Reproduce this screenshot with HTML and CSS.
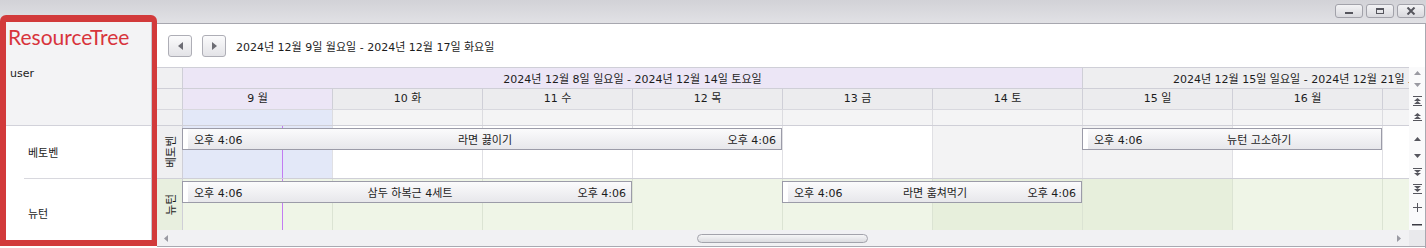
FILE: index.html
```html
<!DOCTYPE html>
<html>
<head>
  <meta charset="utf-8">
  <title>Scheduler</title>
  <link rel="stylesheet" href="styles.css">
</head>
<body>
<div class="window">
  <div class="titlebar">
    <span class="win-btn"><svg width="10" height="8" viewBox="0 0 10 8"><rect x="1" y="5" width="8" height="2" fill="#55555d"/></svg></span>
    <span class="win-btn"><svg width="10" height="8" viewBox="0 0 10 8"><rect x="1.5" y="1.5" width="7" height="5" fill="none" stroke="#55555d"/><rect x="1" y="1" width="8" height="2" fill="#55555d"/></svg></span>
    <span class="win-btn"><svg width="10" height="8" viewBox="0 0 10 8"><path d="M1.5 0.5 L8.5 7.5 M8.5 0.5 L1.5 7.5" stroke="#55555d" stroke-width="2"/></svg></span>
  </div>

  <div class="main">
    <aside class="resource-tree">
      <div class="tree-head">
        <div class="tree-title">ResourceTree</div>
        <div class="tree-user">user</div>
      </div>
      <div class="tree-row">베토벤</div>
      <div class="tree-row last">뉴턴</div>
    </aside>

    <section class="scheduler">
      <div class="toolbar">
        <button class="nav-btn"><svg width="5" height="8" viewBox="0 0 5 8"><path d="M5 0 L0 4 L5 8Z" fill="#6c6c74"/></svg></button>
        <button class="nav-btn"><svg width="5" height="8" viewBox="0 0 5 8"><path d="M0 0 L5 4 L0 8Z" fill="#6c6c74"/></svg></button>
        <span class="range">2024년 12월 9일 월요일 - 2024년 12월 17일 화요일</span>
      </div>

      <div class="view">
        <div class="grid">
          <div class="hrow week-row">
            <div class="corner"></div>
            <div class="week current">2024년 12월 8일 일요일 - 2024년 12월 14일 토요일</div>
            <div class="week next">2024년 12월 15일 일요일 - 2024년 12월 21일 토요일</div>
          </div>
          <div class="hrow day-row">
            <div class="corner"></div>
            <div class="day today">9 월</div>
            <div class="day">10 화</div>
            <div class="day">11 수</div>
            <div class="day">12 목</div>
            <div class="day">13 금</div>
            <div class="day">14 토</div>
            <div class="day">15 일</div>
            <div class="day">16 월</div>
            <div class="day">17 화</div>
          </div>
          <div class="hrow allday-row">
            <div class="corner"></div>
            <div class="slot today"></div>
            <div class="slot"></div>
            <div class="slot"></div>
            <div class="slot"></div>
            <div class="slot"></div>
            <div class="slot"></div>
            <div class="slot"></div>
            <div class="slot"></div>
            <div class="slot"></div>
          </div>

          <div class="res-row">
            <div class="res-label"><span>베토벤</span></div>
            <div class="lane">
              <div class="cells">
                <div class="cell today"></div>
                <div class="cell"></div>
                <div class="cell"></div>
                <div class="cell"></div>
                <div class="cell"></div>
                <div class="cell weekend"></div>
                <div class="cell weekend"></div>
                <div class="cell"></div>
                <div class="cell"></div>
              </div>
              <div class="events">
                <div class="event" style="grid-column: 1 / 5">
                  <span>오후 4:06</span><span class="title">라면 끓이기</span><span>오후 4:06</span>
                </div>
                <div class="event" style="grid-column: 7 / 9">
                  <span>오후 4:06</span><span class="title">뉴턴 고소하기</span>
                </div>
              </div>
            </div>
          </div>

          <div class="res-row green">
            <div class="res-label"><span>뉴턴</span></div>
            <div class="lane">
              <div class="cells">
                <div class="cell today"></div>
                <div class="cell"></div>
                <div class="cell"></div>
                <div class="cell"></div>
                <div class="cell"></div>
                <div class="cell weekend"></div>
                <div class="cell weekend"></div>
                <div class="cell"></div>
                <div class="cell"></div>
              </div>
              <div class="events">
                <div class="event" style="grid-column: 1 / 4">
                  <span>오후 4:06</span><span class="title">삼두 하복근 4세트</span><span>오후 4:06</span>
                </div>
                <div class="event" style="grid-column: 5 / 7">
                  <span>오후 4:06</span><span class="title">라면 훔쳐먹기</span><span>오후 4:06</span>
                </div>
              </div>
            </div>
          </div>
        </div>

        <div class="vscroll">
          <div class="vs-head">
            <svg width="7" height="4" viewBox="0 0 7 4"><path d="M3.5 0 L7 4 H0Z" fill="#9a9aa2"/></svg>
            <svg width="7" height="4" viewBox="0 0 7 4"><path d="M0 0 H7 L3.5 4Z" fill="#9a9aa2"/></svg>
          </div>
          <div class="vs-btn"><svg width="9" height="10" viewBox="0 0 9 10" fill="#56565e"><rect width="9" height="1"/><path d="M4.5 2 L8 5 H1Z"/><path d="M4.5 5 L8 8 H1Z"/><rect y="9" width="9" height="1"/></svg></div>
          <div class="vs-btn"><svg width="9" height="8" viewBox="0 0 9 8" fill="#56565e"><path d="M4.5 0 L8 3 H1Z"/><path d="M4.5 3 L8 6 H1Z"/><rect y="7" width="9" height="1"/></svg></div>
          <div class="vs-btn up"><svg width="7" height="4" viewBox="0 0 7 4"><path d="M3.5 0 L7 4 H0Z" fill="#56565e"/></svg></div>
          <div class="vs-btn down"><svg width="7" height="4" viewBox="0 0 7 4"><path d="M0 0 H7 L3.5 4Z" fill="#56565e"/></svg></div>
          <div class="vs-btn"><svg width="9" height="8" viewBox="0 0 9 8" fill="#56565e"><rect width="9" height="1"/><path d="M1 2 H8 L4.5 5Z"/><path d="M1 5 H8 L4.5 8Z"/></svg></div>
          <div class="vs-btn bottom"><svg width="9" height="10" viewBox="0 0 9 10" fill="#56565e"><rect width="9" height="1"/><path d="M1 2 H8 L4.5 5Z"/><path d="M1 5 H8 L4.5 8Z"/><rect y="9" width="9" height="1"/></svg></div>
          <div class="vs-btn plus"><svg width="9" height="9" viewBox="0 0 9 9" fill="#56565e"><rect y="4" width="9" height="1"/><rect x="4" width="1" height="9"/></svg></div>
          <div class="vs-btn minus"><svg width="10" height="2" viewBox="0 0 10 2"><rect width="10" height="1.5" fill="#3c3c44"/></svg></div>
        </div>
      </div>

      <div class="hscroll">
        <div class="hs-track">
          <svg width="4" height="7" viewBox="0 0 4 7"><path d="M4 0 L0 3.5 L4 7Z" fill="#9a9aa2"/></svg>
          <span class="thumb"></span>
          <svg class="hs-right" width="4" height="7" viewBox="0 0 4 7"><path d="M0 0 L4 3.5 L0 7Z" fill="#9a9aa2"/></svg>
        </div>
        <div class="hs-corner"></div>
      </div>
    </section>
  </div>
</div>
</body>
</html>
```

FILE: styles.css
```css
::-webkit-scrollbar {
  display: none;
}
body {
  margin: 0;
  font-family: "DejaVu Sans", "Noto Sans CJK KR", sans-serif;
  font-size: 11px;
  color: #1c1c1c;
}
.window {
  width: 1426px;
  height: 248px;
  overflow: hidden;
  display: flex;
  flex-direction: column;
  background: #fff;
}

/* title bar */
.titlebar {
  flex: none;
  height: 24px;
  box-sizing: border-box;
  border-bottom: 1px solid #a7a7af;
  background: linear-gradient(#d2d2d7, #e1e1e5);
  display: flex;
  justify-content: flex-end;
  gap: 3px;
  padding: 4px 1px 0 0;
}
.win-btn {
  width: 28px;
  height: 14px;
  box-sizing: border-box;
  border: 1px solid #a2a2aa;
  border-radius: 3px;
  background: linear-gradient(#f3f3f5, #d9d9de);
  display: flex;
  align-items: center;
  justify-content: center;
}

.main {
  flex: 1;
  display: flex;
  min-height: 0;
}

/* resource tree */
.resource-tree {
  flex: none;
  width: 157px;
  height: 231px;
  margin-top: -9px;
  box-sizing: border-box;
  border: solid #d23a3b;
  border-width: 7px 5px 6px 6px;
  border-radius: 6px 6px 0 0;
  background: #fff;
  box-shadow: inset -1px 0 #c6c6ce;
  display: flex;
  flex-direction: column;
}
.tree-head {
  height: 104px;
  box-sizing: border-box;
  background: #f3f3f5;
  border-bottom: 1px solid #d2d2da;
  border-right: 1px solid #c6c6ce;
  padding: 3px 0 0 2px;
}
.tree-title {
  font-family: Lato, "Liberation Sans", sans-serif;
  font-size: 21px;
  line-height: 24px;
  color: #d8343c;
}
.tree-user {
  margin-top: 18px;
  padding-left: 2px;
  line-height: 14px;
}
.tree-row {
  height: 53px;
  box-sizing: border-box;
  margin-left: 18px;
  margin-right: 1px;
  padding-left: 4px;
  border-bottom: 1px solid #d8d8de;
  display: flex;
  align-items: center;
}
.tree-row.last {
  flex: 1;
  border-bottom: none;
  padding-top: 6px;
}

/* scheduler */
.scheduler {
  flex: 1;
  min-width: 0;
  display: flex;
  flex-direction: column;
  border-right: 1px solid #a9a9b1;
}
.toolbar {
  flex: none;
  height: 43px;
  display: flex;
  align-items: center;
  gap: 10px;
  padding-left: 11px;
}
.nav-btn {
  width: 24px;
  height: 22px;
  padding: 0;
  border: 1px solid #aeaeb6;
  border-radius: 3px;
  background: linear-gradient(#fbfbfc, #e3e3e7);
  display: flex;
  align-items: center;
  justify-content: center;
}

.view {
  flex: none;
  height: 163px;
  display: flex;
}
.grid {
  flex: none;
  width: 1252px;
  overflow: hidden;
}
.hrow {
  display: flex;
  box-sizing: border-box;
  border-top: 1px solid #cfcfd7;
}
.corner {
  flex: none;
  width: 26px;
  box-sizing: border-box;
  background: #f0f0f2;
  border-right: 1px solid #cfcfd7;
}
.week-row {
  height: 21px;
}
.week {
  flex: none;
  box-sizing: border-box;
  border-right: 1px solid #cfcfd7;
  display: flex;
  align-items: center;
  justify-content: center;
  white-space: nowrap;
  overflow: hidden;
}
.week.current {
  width: 900px;
  background: #ece6f6;
}
.week.next {
  width: 1050px;
  background: #eeeef0;
  justify-content: flex-start;
  padding-left: 90px;
}
.day-row {
  height: 21px;
}
.day {
  flex: none;
  width: 150px;
  box-sizing: border-box;
  border-right: 1px solid #cfcfd7;
  background: #ececee;
  text-align: center;
  line-height: 20px;
}
.day.today {
  background: #ece6f6;
}
.allday-row {
  height: 16px;
  border-top-color: #d8d8de;
}
.slot {
  flex: none;
  width: 150px;
  box-sizing: border-box;
  border-right: 1px solid #dcdce0;
  background: #f4f4f5;
}
.slot.today {
  background: #e3e8f8;
}

.res-row {
  display: flex;
  height: 53px;
  box-sizing: border-box;
  border-top: 1px solid #cfcfd7;
}
.res-row.green {
  height: 52px;
}
.res-label {
  flex: none;
  width: 26px;
  box-sizing: border-box;
  border-right: 1px solid #cfcfd7;
  background: #efeff1;
  display: flex;
  align-items: center;
  justify-content: center;
}
.green .res-label {
  background: #e8efdf;
}
.res-label span {
  writing-mode: vertical-rl;
  text-orientation: sideways;
  transform: rotate(180deg);
  font-family: "Noto Sans CJK KR", sans-serif;
  font-size: 11.5px;
}
.lane {
  flex: none;
  width: 1350px;
  display: grid;
}
.cells, .events {
  grid-area: 1 / 1;
}
.cells {
  display: flex;
}
.cell {
  flex: none;
  width: 150px;
  box-sizing: border-box;
  border-right: 1px solid #e0e0e4;
  background: #fff;
}
.cell.weekend {
  background: #f3f3f4;
}
.cell.today {
  background: linear-gradient(to right, transparent 99px, #c27cf2 99px, #c27cf2 100px, transparent 100px), #e3e8f8;
}
.green .cell {
  background: #eff5e7;
  border-right-color: #dbe3d3;
}
.green .cell.weekend {
  background: #e7efdc;
}
.green .cell.today {
  background: linear-gradient(to right, transparent 99px, #c27cf2 99px, #c27cf2 100px, transparent 100px), #eff5e7;
}
.events {
  display: grid;
  grid-template-columns: repeat(9, 150px);
  align-items: start;
  padding-top: 2px;
}
.event {
  height: 22px;
  box-sizing: border-box;
  margin: 0 1px 0 -1px;
  padding: 0 5px 0 11px;
  border: 1px solid #9b9ba8;
  background: linear-gradient(to right, #fff 5px, transparent 5px), linear-gradient(#fbfbfc, #e7e7eb);
  display: flex;
  align-items: center;
  white-space: nowrap;
  overflow: hidden;
}
.event .title {
  flex: 1;
  text-align: center;
  overflow: hidden;
}

/* vertical buttons */
.vscroll {
  flex: none;
  width: 16px;
  background: #fafafb;
  display: flex;
  flex-direction: column;
  align-items: center;
}
.vs-head {
  height: 26px;
  box-sizing: border-box;
  padding-top: 4px;
  display: flex;
  flex-direction: column;
  align-items: center;
  gap: 8px;
}
.vs-btn {
  height: 16px;
  display: flex;
  align-items: center;
  justify-content: center;
}
.vs-btn.up {
  margin-top: 6px;
}
.vs-btn.down {
  margin-top: 1px;
}
.vs-btn.bottom {
  margin-top: 1px;
}
.vs-btn.plus {
  margin-top: 2px;
}
.vs-btn.minus {
  height: 10px;
  margin-top: 5px;
}

/* horizontal scrollbar */
.hscroll {
  flex: none;
  height: 17px;
  box-sizing: border-box;
  border-bottom: 1px solid #a9a9b1;
  display: flex;
  background: #f1f1f3;
}
.hs-track {
  flex: none;
  width: 1252px;
  box-sizing: border-box;
  padding: 0 8px 0 7px;
  display: flex;
  align-items: center;
}
.thumb {
  width: 171px;
  height: 9px;
  box-sizing: border-box;
  margin-left: 529px;
  border: 1px solid #a3a3ab;
  border-radius: 5px;
  background: linear-gradient(#f6f6f7, #dcdce0);
}
.hs-right {
  margin-left: auto;
}
.hs-corner {
  flex: 1;
  background: #e9e9ec;
}
```
